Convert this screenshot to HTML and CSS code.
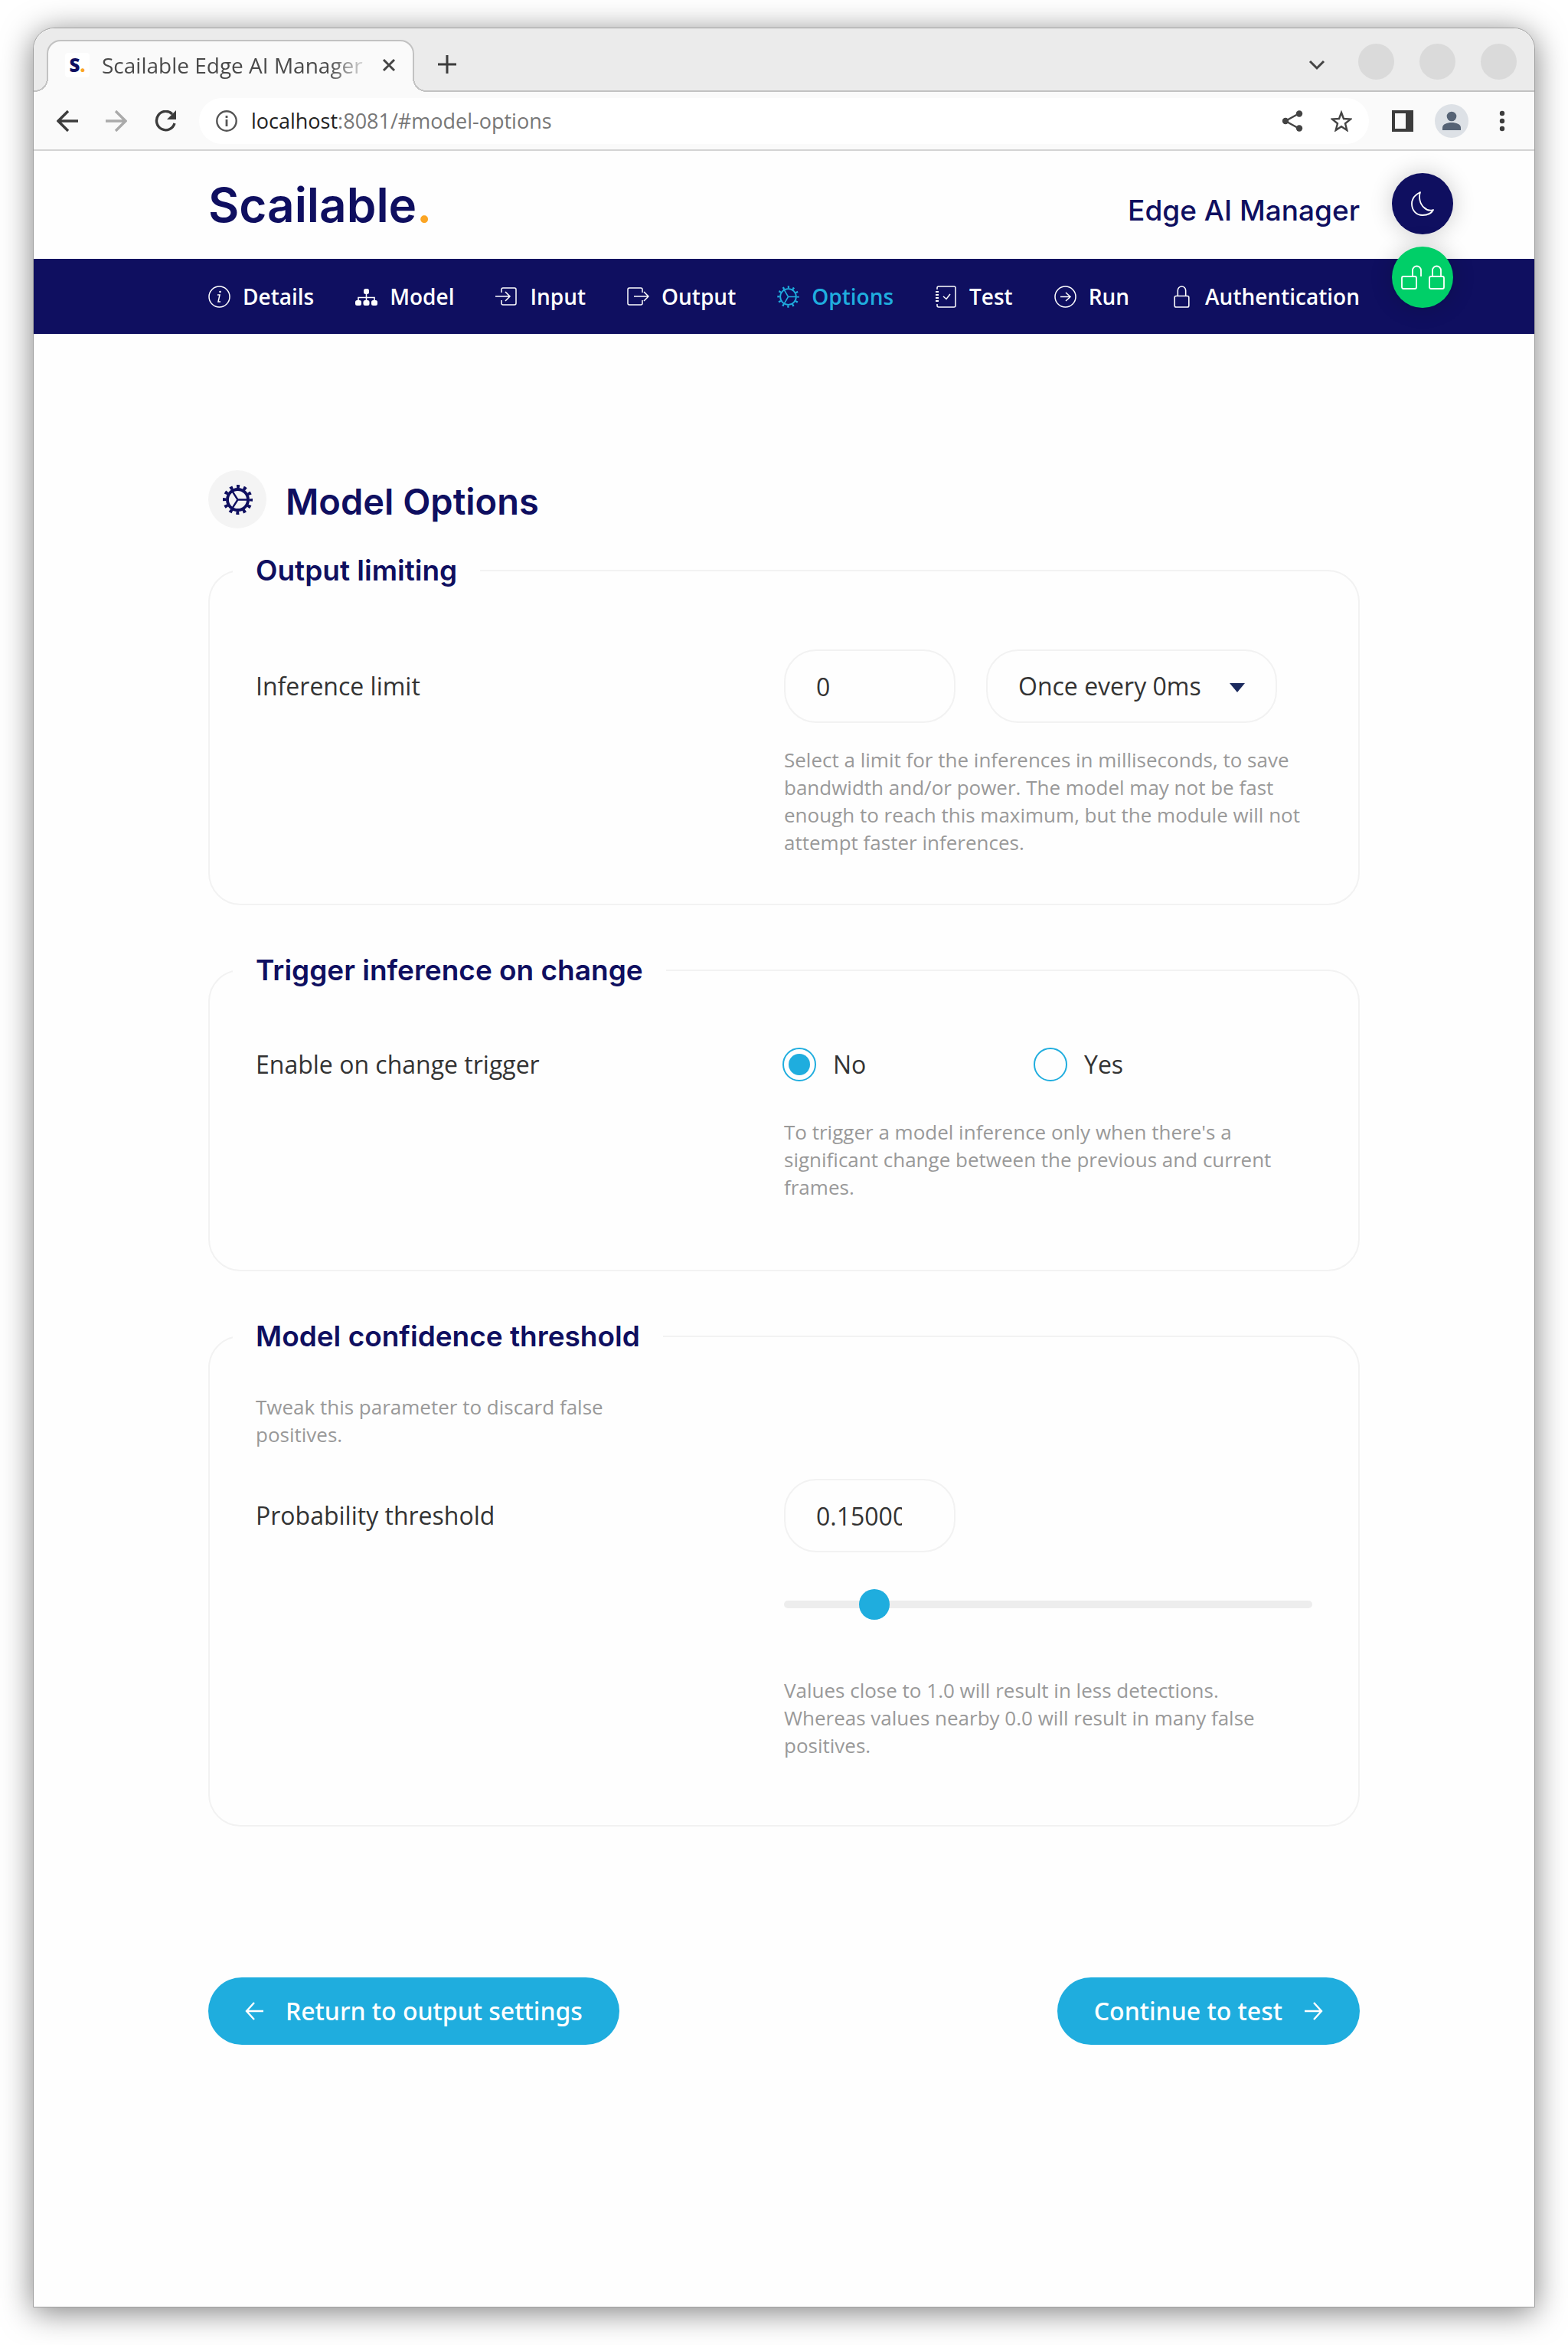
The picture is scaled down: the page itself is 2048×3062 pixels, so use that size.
FILE: index.html
```html
<!DOCTYPE html>
<html lang="en">
<head>
<meta charset="utf-8">
<title>Scailable Edge AI Manager</title>
<link rel="stylesheet" href="styles.css">
</head>
<body>
<svg class="sprite" aria-hidden="true">
  <symbol id="gear" viewBox="0 0 28 28">
    <g fill="none" stroke="currentColor">
      <circle cx="14" cy="14" r="10" stroke-width="1.800"/>
      <circle cx="14" cy="14" r="12.200" stroke-width="3" stroke-dasharray="2.200 4.188" stroke-dashoffset="1.100"/>
      <path d="M14 14h10M14 14L9 5.400M14 14L9 22.600" stroke-width="1.500"/>
    </g>
  </symbol>
  <symbol id="gear-bold" viewBox="0 0 28 28">
    <g fill="none" stroke="currentColor">
      <circle cx="14" cy="14" r="9.700" stroke-width="2.800"/>
      <circle cx="14" cy="14" r="12.400" stroke-width="3.200" stroke-dasharray="2.900 3.593" stroke-dashoffset="1.450"/>
      <path d="M14 14h9M14 14L9 6.200M14 14L9 21.800" stroke-width="1.700"/>
    </g>
  </symbol>
  <symbol id="lock" viewBox="0 0 20 28">
    <path d="M1 15a2 2 0 0 1 2-2h14a2 2 0 0 1 2 2v10a2 2 0 0 1-2 2H3a2 2 0 0 1-2-2zM5 13V6a5 5 0 0 1 10 0v7" fill="none" stroke="currentColor" stroke-width="1.500"/>
  </symbol>
</svg>
<div class="window">
  <div class="titlebar">
    <div class="tab">
      <span class="favicon">S<i>.</i></span>
      <span class="tab-title">Scailable Edge AI Manager</span>
      <button class="plain" aria-label="Close tab"><svg width="18" height="18" viewBox="0 0 18 18"><path d="M2 2l14 14M16 2L2 16" stroke="#444" stroke-width="3"/></svg></button>
    </div>
    <button class="plain new-tab" aria-label="New tab"><svg width="24" height="24" viewBox="0 0 24 24"><path d="M12 0v24M0 12h24" stroke="#3c3c3c" stroke-width="3"/></svg></button>
    <button class="plain tab-search" aria-label="Search tabs"><svg width="22" height="14" viewBox="0 0 22 14"><path d="M2 2l9 9 9-9" fill="none" stroke="#444" stroke-width="3"/></svg></button>
    <div class="window-buttons">
      <button aria-label="Minimize"></button>
      <button aria-label="Maximize"></button>
      <button aria-label="Close"></button>
    </div>
  </div>
  <div class="toolbar">
    <button class="plain" aria-label="Back"><svg width="28" height="28" viewBox="0 0 28 28"><path d="M28 14H3M15 1L2 14l13 13" fill="none" stroke="#3c3c3c" stroke-width="3.400"/></svg></button>
    <button class="plain" aria-label="Forward"><svg width="28" height="28" viewBox="0 0 28 28"><path d="M0 14h25M13 1l13 13-13 13" fill="none" stroke="#aaa" stroke-width="3.400"/></svg></button>
    <button class="plain" aria-label="Reload"><svg width="28" height="28" viewBox="0 0 28 28"><path d="M26 17a12 12.200 0 1 1-3-12" fill="none" stroke="#3c3c3c" stroke-width="3.400"/><path d="M28 0v12H16z" fill="#3c3c3c"/></svg></button>
    <div class="omnibox">
      <svg width="28" height="28" viewBox="0 0 28 28"><circle cx="14" cy="14" r="12.700" fill="none" stroke="#555" stroke-width="2.400"/><path d="M14 12v9M14 7v3" stroke="#555" stroke-width="2.800"/></svg>
      <span class="url"><b>localhost</b>:8081/#model-options</span>
      <svg width="28" height="28" viewBox="0 0 28 28"><path d="M23 4L5 14l18 10" fill="none" stroke="#444" stroke-width="2.400"/><g fill="#444"><circle cx="23" cy="4.500" r="4.200"/><circle cx="5" cy="14" r="4.200"/><circle cx="23" cy="23.500" r="4.200"/></g></svg>
      <svg width="28" height="28" viewBox="0 0 28 28"><path d="M14 3l3 8 9 .6-7 5.600 2.300 8.800L14 21.200 6.700 26 9 17.200 2 11.600l9-.6z" fill="none" stroke="#444" stroke-width="2.400"/></svg>
    </div>
    <div class="toolbar-end">
      <button class="plain" aria-label="Side panel"><svg width="28" height="28" viewBox="0 0 28 28"><path d="M0 0h28v28H0zM4 4v20h14V4z" fill="#3c3c3c" fill-rule="evenodd"/></svg></button>
      <button class="plain" aria-label="Profile"><svg width="44" height="44" viewBox="0 0 44 44"><circle cx="22" cy="22" r="22" fill="#dde1e6"/><circle cx="22" cy="16" r="6.300" fill="#566375"/><path d="M10 34v-3c0-5 6-7 12-7s12 2 12 7v3z" fill="#566375"/></svg></button>
      <button class="plain" aria-label="Menu"><svg width="8" height="28" viewBox="0 0 8 28"><g fill="#3c3c3c"><circle cx="4" cy="4" r="3.200"/><circle cx="4" cy="14" r="3.200"/><circle cx="4" cy="24" r="3.200"/></g></svg></button>
    </div>
  </div>

  <div class="page">
    <header class="column brand-row">
      <a class="brand" href="#">Scailable<span>.</span></a>
      <span class="product">Edge AI Manager</span>
      <div class="floating">
        <button class="round" aria-label="Dark mode"><svg width="32" height="32" viewBox="0 0 32 32"><path d="M13 1C7 4 2 9 2 16c0 9 6 15 14 15 7 0 12-3 14-7-3 1-8 1-12-3C12 16 11 7 13 1z" fill="none" stroke="#fff" stroke-width="1.800" stroke-linejoin="round"/></svg></button>
        <button class="round round-green" aria-label="Lock status">
          <svg width="27" height="32" viewBox="0 0 27 32"><path d="M1 17a2 2 0 0 1 2-2h15a2 2 0 0 1 2 2v12a2 2 0 0 1-2 2H3a2 2 0 0 1-2-2zM15 15V7a5.500 5.500 0 0 1 11 0v8" fill="none" stroke="#fff" stroke-width="1.800"/></svg>
          <svg width="21" height="32" viewBox="0 0 21 32"><path d="M1 17a2 2 0 0 1 2-2h15a2 2 0 0 1 2 2v12a2 2 0 0 1-2 2H3a2 2 0 0 1-2-2zM5 15V7a5.500 5.500 0 0 1 11 0v8" fill="none" stroke="#fff" stroke-width="1.800"/></svg>
        </button>
      </div>
    </header>
    <nav class="nav">
      <div class="column nav-row">
        <a href="#details"><svg width="29" height="29" viewBox="0 0 29 29"><circle cx="14.500" cy="14.500" r="13.500" fill="none" stroke="currentColor" stroke-width="1.500"/><path d="M12 12h3l-2 9h3" fill="none" stroke="currentColor" stroke-width="1.500"/><circle cx="15.500" cy="8" r="1.300" fill="currentColor"/></svg>Details</a>
        <a href="#model"><svg width="29" height="29" viewBox="0 0 29 29"><g fill="currentColor"><rect x="11" y="4" width="7" height="7" rx="2.500"/><rect x="0" y="19" width="8" height="7" rx="2.500"/><rect x="10.500" y="19" width="8" height="7" rx="2.500"/><rect x="21" y="19" width="8" height="7" rx="2.500"/></g><path d="M14.500 10v9M4 19v-3.500h21V19" fill="none" stroke="currentColor" stroke-width="1.600"/></svg>Model</a>
        <a href="#input"><svg width="29" height="29" viewBox="0 0 29 29"><path d="M8 9V5q0-2 2-2h15q2 0 2 2v18q0 2-2 2H10q-2 0-2-2v-4M0 14h19M13 8l6 6-6 6" fill="none" stroke="currentColor" stroke-width="1.500"/></svg>Input</a>
        <a href="#output"><svg width="29" height="29" viewBox="0 0 29 29"><path d="M20 9V5q0-2-2-2H3Q1 3 1 5v18q0 2 2 2h15q2 0 2-2v-4M9 14h19M22 8l6 6-6 6" fill="none" stroke="currentColor" stroke-width="1.500"/></svg>Output</a>
        <a href="#model-options" class="active"><svg width="29" height="29"><use href="#gear"/></svg>Options</a>
        <a href="#test"><svg width="29" height="29" viewBox="0 0 29 29"><path d="M3 5V3q0-2 2-2h20q2 0 2 2v23q0 2-2 2H5q-2 0-2-2v-2M11 14l4 3.500 5-6.500" fill="none" stroke="currentColor" stroke-width="1.500"/><path d="M1 8h4M1 12h4M1 16h4M1 20h4" stroke="currentColor" stroke-width="1.800"/></svg>Test</a>
        <a href="#run"><svg width="29" height="29" viewBox="0 0 29 29"><circle cx="14.500" cy="14.500" r="13.500" fill="none" stroke="currentColor" stroke-width="1.500"/><path d="M8 14.500h13M15 9l6 5.500-6 5.500" fill="none" stroke="currentColor" stroke-width="1.500"/></svg>Run</a>
        <a href="#authentication"><svg width="29" height="29"><use href="#lock"/></svg>Authentication</a>
      </div>
    </nav>

    <main class="column">
      <div class="heading">
        <span class="heading-icon"><svg width="39" height="39"><use href="#gear-bold"/></svg></span>
        <h1>Model Options</h1>
      </div>
      <form>
        <fieldset class="limit">
          <legend>Output limiting</legend>
          <div class="grid">
            <label class="tall" for="limit">Inference limit</label>
            <div>
              <div class="fields">
                <input class="box" id="limit" type="text" inputmode="numeric" value="0">
                <div class="select">
                  <select aria-label="Rate"><option>Once every 0ms</option></select>
                  <svg width="22" height="12" viewBox="0 0 22 12"><path d="M1 0h20L11 12z" fill="#1b2a5e"/></svg>
                </div>
              </div>
              <p class="hint">Select a limit for the inferences in milliseconds, to save bandwidth and/or power. The model may not be fast enough to reach this maximum, but the module will not attempt faster inferences.</p>
            </div>
          </div>
        </fieldset>

        <fieldset class="trigger">
          <legend>Trigger inference on change</legend>
          <div class="grid">
            <span>Enable on change trigger</span>
            <div>
              <div class="choices">
                <label><input type="radio" name="trigger" checked>No</label>
                <label><input type="radio" name="trigger">Yes</label>
              </div>
              <p class="hint">To trigger a model inference only when there's a significant change between the previous and current frames.</p>
            </div>
          </div>
        </fieldset>

        <fieldset class="threshold">
          <legend>Model confidence threshold</legend>
          <div class="grid">
            <p class="hint intro">Tweak this parameter to discard false positives.</p>
            <label class="tall" for="probability">Probability threshold</label>
            <div>
              <input class="box" id="probability" type="text" inputmode="decimal" value="0.150000">
              <input class="slider" type="range" min="0" max="1" step="0.01" value="0.15" aria-label="Probability threshold slider">
              <p class="hint">Values close to 1.0 will result in less detections.<br>Whereas values nearby 0.0 will result in many false positives.</p>
            </div>
          </div>
        </fieldset>

        <div class="actions">
          <button type="button"><svg width="24" height="24" viewBox="0 0 24 24"><path d="M24 12H2M12 1L2 12l10 11" fill="none" stroke="#fff" stroke-width="2.400"/></svg>Return to output settings</button>
          <button type="button">Continue to test<svg width="24" height="24" viewBox="0 0 24 24"><path d="M0 12h22M12 1l10 11-10 11" fill="none" stroke="#fff" stroke-width="2.400"/></svg></button>
        </div>
      </form>
    </main>
  </div>
</div>
</body>
</html>
```
FILE: styles.css
```css
* { box-sizing: border-box; }

:root {
  --navy: #0f0f60;
  --blue: #1fadde;
  --line: #f2f2f2;
  --display: Inter, sans-serif;
}

body {
  margin: 0;
  min-height: 100vh;
  padding: 36px 43px 49px;
  display: flex;
  background: #fff;
  color: #333;
  font: 32px/44px "Open Sans", "Noto Sans", sans-serif;
}

svg { display: block; flex: none; }
.sprite { position: absolute; width: 0; height: 0; }

button { font: inherit; cursor: pointer; border: 0; padding: 0; }
.plain { background: none; }

/* Browser window */
.window {
  flex: 1;
  min-width: 0;
  display: flex;
  flex-direction: column;
  border: 1px solid #a0a0a0;
  border-radius: 28px 28px 0 0;
  box-shadow: 0 6px 40px rgba(0, 0, 0, .5);
  background: #fefefe;
}

.titlebar {
  display: flex;
  height: 83px;
  padding: 0 23px 0 17px;
  border-bottom: 2px solid #c2c2c2;
  border-radius: 28px 28px 0 0;
  background: #ebebeb;
}

.tab {
  position: relative;
  display: flex;
  align-items: center;
  width: 480px;
  height: 68px;
  margin-top: 15px;
  padding: 0 22px 4px;
  border: 2px solid #c2c2c2;
  border-bottom: 0;
  border-radius: 18px 18px 0 0;
  background: #fafafa;
}

/* Flared feet where the tab meets the toolbar */
.tab::before,
.tab::after {
  content: "";
  position: absolute;
  bottom: 0;
  width: 18px;
  height: 18px;
}
.tab::before { right: 100%; background: radial-gradient(circle at top left, #ebebeb 16px, #c2c2c2 16px 18px, #fafafa 18px); }
.tab::after { left: 100%; background: radial-gradient(circle at top right, #ebebeb 16px, #c2c2c2 16px 18px, #fafafa 18px); }

.favicon {
  width: 32px;
  margin-right: 16px;
  border-radius: 4px;
  background: #fff;
  color: var(--navy);
  font: 800 24px/32px "Open Sans", sans-serif;
  text-align: center;
}
.favicon i { color: #fba524; font-style: normal; }

.tab-title {
  flex: 1;
  min-width: 0;
  overflow: hidden;
  margin-right: 14px;
  color: #4a4a4a;
  font-size: 28px;
  white-space: nowrap;
  mask-image: linear-gradient(to right, #000 84%, transparent);
}

.new-tab { margin: 12px auto 0 31px; }
.tab-search { margin-top: 14px; }
.window-buttons { display: flex; gap: 33px; margin: 20px 0 0 43px; }
.window-buttons button { width: 47px; height: 47px; border-radius: 50%; background: #dadada; }

.toolbar {
  display: flex;
  align-items: center;
  gap: 36px;
  height: 77px;
  padding: 0 38px 0 30px;
  border-bottom: 2px solid #d4d4d4;
  background: #fafafa;
}
.omnibox {
  flex: 1;
  display: flex;
  align-items: center;
  gap: 36px;
  height: 60px;
  margin-left: -6px;
  padding: 0 22px;
  border-radius: 30px;
  background: #fff;
}
.url { flex: 1; margin-left: -18px; color: #777; font-size: 27px; }
.url b { color: #222; font-weight: 400; }
.toolbar-end { display: flex; align-items: center; gap: 28px; margin-left: -6px; }
.toolbar-end .plain:last-child { margin-left: 12px; }

/* Page */
.column { width: 100%; max-width: 1504px; margin: 0 auto; }

.brand-row {
  position: relative;
  display: flex;
  align-items: center;
  justify-content: space-between;
  height: 141px;
  color: var(--navy);
  font-family: var(--display);
}
.brand { color: inherit; font-size: 62px; font-weight: 600; line-height: 76px; text-decoration: none; }
.brand span { color: #fba524; }
.product { padding-top: 14px; font-size: 37px; font-weight: 500; }

.floating {
  position: absolute;
  top: 29px;
  left: 100%;
  display: grid;
  gap: 16px;
  margin-left: 42px;
}
.round {
  display: flex;
  align-items: center;
  justify-content: center;
  gap: 9px;
  width: 80px;
  height: 80px;
  border-radius: 50%;
  background: var(--navy);
  box-shadow: 0 0 30px rgba(0, 0, 0, .2);
}
.round-green { background: #00cf68; }

.nav { background: var(--navy); }
.nav-row { display: flex; justify-content: space-between; }
.nav a {
  display: flex;
  align-items: center;
  gap: 16px;
  height: 98px;
  color: #fff;
  font-size: 28px;
  font-weight: 600;
  text-decoration: none;
}
.nav a.active { color: var(--blue); }

main { padding: 178px 0 140px; }
.heading { display: flex; align-items: center; gap: 25px; margin-bottom: 33px; color: var(--navy); }
.heading-icon { display: grid; place-items: center; width: 76px; height: 76px; border-radius: 50%; background: #f4f4f4; }
h1 { margin: 0; padding-top: 6px; font: 600 47px/60px var(--display); }

fieldset {
  min-width: 0;
  margin: 0 0 63px;
  padding: 52px 30px 62px;
  border: 2px solid var(--line);
  border-radius: 42px;
}
legend { padding: 0 30px; color: var(--navy); font: 600 37px/44px var(--display); }
.grid { display: grid; grid-template-columns: 1fr 1fr; padding: 0 30px; }
.limit .grid { padding-top: 29px; }
.trigger { padding-bottom: 90px; }
.trigger .grid { padding-top: 27px; }
.threshold { padding-bottom: 86px; }
.tall { line-height: 96px; }

.hint { margin: 30px 0 0; color: #999; font-size: 26px; line-height: 36px; }
.intro { grid-column: 1 / -1; max-width: 520px; margin: 0 0 40px; }

.fields { display: flex; gap: 40px; }
.box,
select {
  display: block;
  height: 96px;
  border: 2px solid var(--line);
  border-radius: 42px;
  background: transparent;
  color: #333;
  font: inherit;
  appearance: none;
}
.box { width: 224px; padding: 0 68px 0 40px; }
.select { position: relative; width: 380px; }
select { width: 100%; padding: 0 80px 0 40px; }
.select svg { position: absolute; right: 41px; top: 44px; pointer-events: none; }

.choices { display: flex; }
.choices label { display: flex; align-items: center; gap: 22px; width: 328px; }
.choices input {
  appearance: none;
  width: 44px;
  height: 44px;
  margin: 0 0 0 -2px;
  padding: 6px;
  border: 2px solid var(--blue);
  border-radius: 50%;
}
.choices input:checked { background: var(--blue) content-box; }
.trigger .hint { margin-top: 48px; }

.slider { appearance: none; display: block; width: 100%; height: 40px; margin: 48px 0 0; background: none; }
.slider::-webkit-slider-runnable-track { height: 10px; border-radius: 5px; background: #ededed; }
.slider::-webkit-slider-thumb { appearance: none; width: 40px; height: 40px; margin-top: -15px; border-radius: 50%; background: var(--blue); }
.threshold .slider + .hint { margin-top: 74px; }

.actions { display: flex; justify-content: space-between; padding-top: 134px; }
.actions button {
  display: flex;
  align-items: center;
  gap: 29px;
  height: 88px;
  padding: 0 48px;
  border-radius: 44px;
  background: var(--blue);
  color: #fff;
  font-family: "Noto Sans", sans-serif;
  font-weight: 500;
}
```
